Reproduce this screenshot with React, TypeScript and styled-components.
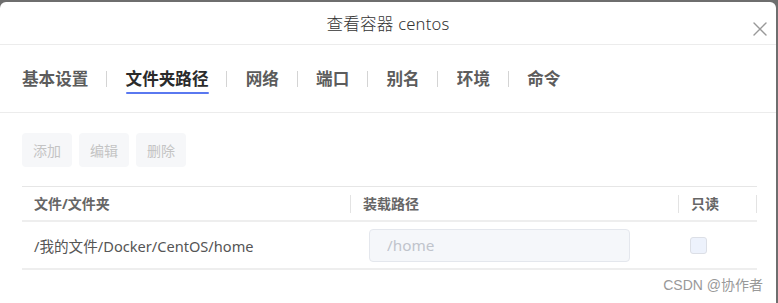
import React from "react";
import styled, { createGlobalStyle } from "styled-components";

const GlobalStyle = createGlobalStyle`
  html, body {
    margin: 0;
    padding: 0;
    background: #ffffff;
  }
  body {
    font-family: "Noto Sans", "Noto Sans CJK SC", sans-serif;
  }
`;

const tabs = ["基本设置", "文件夹路径", "网络", "端口", "别名", "环境", "命令"];
const activeTab = 1;

const App = () => {
  return (
    <SPage>
      <GlobalStyle />
      <SPanel>
        <SHeader>
          <STitle>查看容器 centos</STitle>
          <SClose aria-label="close">
            <svg width="14" height="14" viewBox="0 0 14 14">
              <path
                d="M1 1 L13 13 M13 1 L1 13"
                stroke="#999999"
                strokeWidth="1.4"
                strokeLinecap="round"
              />
            </svg>
          </SClose>
        </SHeader>

        <STabs>
          {tabs.map((t, i) => (
            <React.Fragment key={t}>
              {i > 0 && <STabDivider />}
              <STab $active={i === activeTab}>{t}</STab>
            </React.Fragment>
          ))}
        </STabs>

        <SBody>
          <SToolbar>
            <SButton disabled>添加</SButton>
            <SButton disabled>编辑</SButton>
            <SButton disabled>删除</SButton>
          </SToolbar>

          <STable>
            <SHeadRow>
              <SHeadCell $w={328}>文件/文件夹</SHeadCell>
              <SHeadCell $w={328} $divider>
                装载路径
              </SHeadCell>
              <SHeadCell $w={79} $divider $end>
                只读
              </SHeadCell>
            </SHeadRow>
            <SRow>
              <SCell $w={328}>/我的文件/Docker/CentOS/home</SCell>
              <SCell $w={328}>
                <SInput value="/home" readOnly disabled />
              </SCell>
              <SCell $w={79}>
                <SCheckbox />
              </SCell>
            </SRow>
          </STable>

          <SWatermark>CSDN @协作者</SWatermark>
        </SBody>
      </SPanel>
    </SPage>
  );
};

export default App;

const SPage = styled.div`
  width: 778px;
  height: 303px;
  background: #6e6e6e;
  padding-top: 2px;
  box-sizing: border-box;
  overflow: hidden;
`;

const SPanel = styled.div`
  width: 776px;
  height: 301px;
  background: #ffffff;
  border-radius: 6px 6px 0 0;
  overflow: hidden;
`;

const SHeader = styled.div`
  position: relative;
  height: 42px;
  display: flex;
  align-items: center;
  justify-content: center;
  border-bottom: 1px solid #ececec;
`;

const STitle = styled.div`
  font-size: 16.6px;
  font-weight: 300;
  color: #333333;
  letter-spacing: 0.2px;
`;

const SClose = styled.div`
  position: absolute;
  right: 9px;
  top: 20px;
  width: 14px;
  height: 14px;
  display: flex;
`;

const STabs = styled.div`
  height: 68px;
  display: flex;
  align-items: center;
  padding-left: 22px;
  border-bottom: 1px solid #ececec;
  box-sizing: border-box;
`;

const STab = styled.div<{ $active?: boolean }>`
  position: relative;
  font-size: 16.6px;
  font-weight: 700;
  color: ${(p) => (p.$active ? "#2b2b2b" : "#5c5c5c")};
  line-height: 24px;

  &::after {
    content: "";
    display: ${(p) => (p.$active ? "block" : "none")};
    position: absolute;
    left: 0;
    right: 0;
    bottom: -3px;
    height: 2px;
    border-radius: 1px;
    background: #5a78f0;
  }
`;

const STabDivider = styled.div`
  width: 1px;
  height: 16px;
  background: #d4d4d4;
  margin: 0 18.6px 0 17.6px;
`;

const SBody = styled.div`
  padding: 20px 22px 0;
  display: flex;
  flex-direction: column;
`;

const SToolbar = styled.div`
  display: flex;
  gap: 7px;
`;

const SButton = styled.button`
  width: 50px;
  height: 34px;
  border: none;
  border-radius: 4px;
  background: #f6f7f9;
  color: #c4c4c4;
  font-family: "Noto Sans CJK SC", sans-serif;
  font-size: 14px;
  padding: 0;
`;

const STable = styled.div`
  margin-top: 19px;
  width: 735px;
  border-top: 1px solid #e6e6e6;
`;

const SHeadRow = styled.div`
  display: flex;
  height: 33px;
  align-items: center;
  border-bottom: 2px solid #eeeeee;
`;

const SHeadCell = styled.div<{ $w: number; $divider?: boolean; $end?: boolean }>`
  position: relative;
  width: ${(p) => p.$w}px;
  box-sizing: border-box;
  padding-left: 12px;
  font-size: 14px;
  font-weight: 700;
  color: #666666;
  height: 18px;
  line-height: 18px;
  border-left: ${(p) => (p.$divider ? "1px solid #e3e3e3" : "none")};
  border-right: ${(p) => (p.$end ? "1px solid #e3e3e3" : "none")};
`;

const SRow = styled.div`
  display: flex;
  height: 46px;
  align-items: center;
  border-bottom: 2px solid #eeeeee;
`;

const SCell = styled.div<{ $w: number }>`
  width: ${(p) => p.$w}px;
  box-sizing: border-box;
  padding-left: 12px;
  font-size: 14.6px;
  color: #555555;
  display: flex;
  align-items: center;
`;

const SInput = styled.input`
  margin-left: 7px;
  width: 261px;
  height: 33px;
  box-sizing: border-box;
  border: 1px solid #e4e7ed;
  border-radius: 4px;
  background: #f5f7fa;
  color: #c0c4cc;
  font-family: "Noto Sans", sans-serif;
  font-size: 15.3px;
  padding: 0 17px;
  outline: none;
`;

const SCheckbox = styled.span`
  display: block;
  flex: none;
  width: 17px;
  height: 17px;
  box-sizing: border-box;
  border: 1px solid #dcdfe6;
  border-radius: 3px;
  background: #edf2fc;
`;

const SWatermark = styled.div`
  align-self: flex-end;
  margin-top: 4px;
  margin-right: -9px;
  font-size: 14px;
  color: #999999;
  font-family: "Liberation Sans", "Noto Sans CJK SC", sans-serif;
`;
